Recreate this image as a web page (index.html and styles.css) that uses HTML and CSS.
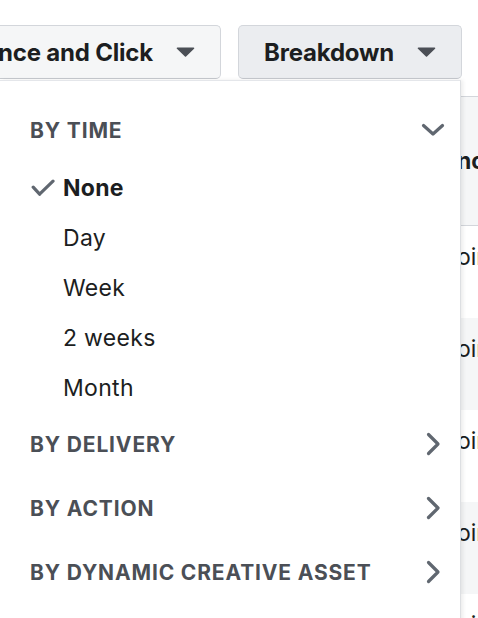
FILE: index.html
```html
<!DOCTYPE html>
<html>
<head>
<meta charset="utf-8">
<link rel="stylesheet" href="styles.css">
</head>
<body>
<div class="page">
  <div class="toolbar">
    <button class="btn">Columns: Performance and Click
      <svg class="caret" viewBox="0 0 19 10"><path d="M1.5 1.2 H17.5 L9.5 9 Z"/></svg>
    </button>
    <button class="btn btn-active">Breakdown
      <svg class="caret" viewBox="0 0 19 10"><path d="M1.5 1.2 H17.5 L9.5 9 Z"/></svg>
    </button>
  </div>

  <div class="table">
    <div class="trow thead"><span class="cell">nce</span></div>
    <div class="trow"><span class="cell">oint</span></div>
    <div class="trow alt"><span class="cell">oint</span></div>
    <div class="trow"><span class="cell">oint</span></div>
    <div class="trow alt"><span class="cell">oint</span></div>
    <div class="trow"><span class="cell">oint</span></div>
  </div>

  <div class="menu">
    <div class="section-head">
      <span class="section-title">By Time</span>
      <span class="icon-box">
        <svg class="chev-down" viewBox="0 0 24 14"><path d="M2.5 2.5 L12 11 L21.5 2.5"/></svg>
      </span>
    </div>
    <div class="item selected">
      <span class="check-box">
        <svg class="check" viewBox="0 0 24 18"><path d="M2.2 8.2 L8.6 15.2 L22 2.2"/></svg>
      </span>
      <span>None</span>
    </div>
    <div class="item"><span class="check-box"></span><span>Day</span></div>
    <div class="item"><span class="check-box"></span><span>Week</span></div>
    <div class="item"><span class="check-box"></span><span>2 weeks</span></div>
    <div class="item"><span class="check-box"></span><span>Month</span></div>

    <div class="section-head">
      <span class="section-title">By Delivery</span>
      <span class="icon-box">
        <svg class="chev-right" viewBox="0 0 15 24"><path d="M2.5 2.5 L12 12 L2.5 21.5"/></svg>
      </span>
    </div>
    <div class="section-head">
      <span class="section-title">By Action</span>
      <span class="icon-box">
        <svg class="chev-right" viewBox="0 0 15 24"><path d="M2.5 2.5 L12 12 L2.5 21.5"/></svg>
      </span>
    </div>
    <div class="section-head">
      <span class="section-title">By Dynamic Creative Asset</span>
      <span class="icon-box">
        <svg class="chev-right" viewBox="0 0 15 24"><path d="M2.5 2.5 L12 12 L2.5 21.5"/></svg>
      </span>
    </div>
  </div>
</div>
</body>
</html>
```

FILE: styles.css
```css
* { box-sizing: border-box; }

html, body {
  margin: 0;
  padding: 0;
  background: #ffffff;
}

body {
  font-family: Inter, "Liberation Sans", sans-serif;
  color: #1c1e21;
}

.page {
  position: relative;
  width: 478px;
  height: 618px;
  overflow: hidden;
}

/* toolbar */
.toolbar {
  display: flex;
  justify-content: flex-end;
  gap: 17px;
  padding: 25px 16px 0 0;
}

.btn {
  flex-shrink: 0;
  display: inline-flex;
  align-items: center;
  gap: 23px;
  height: 54px;
  padding: 0 25px;
  border: 1px solid #d3d6db;
  border-bottom-color: #c6c9ce;
  border-radius: 5px;
  background: #f5f6f7;
  font-family: inherit;
  font-size: 24px;
  font-weight: 700;
  letter-spacing: -0.2px;
  color: #1c1e21;
  white-space: nowrap;
}

.btn-active {
  background: #ebedf0;
}

.caret {
  width: 19px;
  height: 10px;
  fill: #4b4f56;
  stroke: #4b4f56;
  stroke-width: 1.6;
  stroke-linejoin: round;
}

/* table behind the menu */
.table {
  margin-top: 17px;
  border-top: 1px solid #d3d6db;
}

.trow {
  height: 92px;
  padding: 18px 0 0 457px;
  font-size: 23px;
  line-height: 26px;
  white-space: nowrap;
  background: #ffffff;
}

.trow.alt {
  background: #f5f6f7;
}

.trow.thead {
  height: 129px;
  padding-top: 0;
  display: flex;
  align-items: center;
  background: #f5f6f7;
  border-bottom: 1px solid #d3d6db;
  font-weight: 700;
}

/* dropdown menu */
.menu {
  position: absolute;
  top: 80px;
  left: 0;
  width: 461px;
  height: 560px;
  padding-top: 18px;
  background: #ffffff;
  border-top: 1px solid #e4e6ea;
  border-right: 1px solid #dddfe2;
  box-shadow: 2px 0 4px rgba(0, 0, 0, 0.08);
}

.section-head {
  display: flex;
  align-items: center;
  justify-content: space-between;
  height: 64px;
  padding: 0 15px 2px 30px;
}

.section-title {
  font-size: 21px;
  font-weight: 700;
  letter-spacing: 0.85px;
  text-transform: uppercase;
  color: #4b4f56;
}

.icon-box {
  display: flex;
  align-items: center;
  justify-content: center;
  width: 24px;
  height: 24px;
}

.chev-down {
  width: 24px;
  height: 14px;
}

.chev-right {
  width: 15px;
  height: 24px;
}

.chev-down path,
.chev-right path,
.check path {
  fill: none;
  stroke: #606770;
  stroke-width: 3.2;
  stroke-linecap: round;
  stroke-linejoin: round;
}

.item {
  display: flex;
  align-items: center;
  height: 50px;
  font-size: 23px;
  letter-spacing: 0.3px;
  color: #1c1e21;
}

.item.selected {
  font-weight: 700;
}

.check-box {
  display: flex;
  align-items: center;
  width: 63px;
  padding-left: 31px;
}

.check {
  width: 24px;
  height: 18px;
}
```
